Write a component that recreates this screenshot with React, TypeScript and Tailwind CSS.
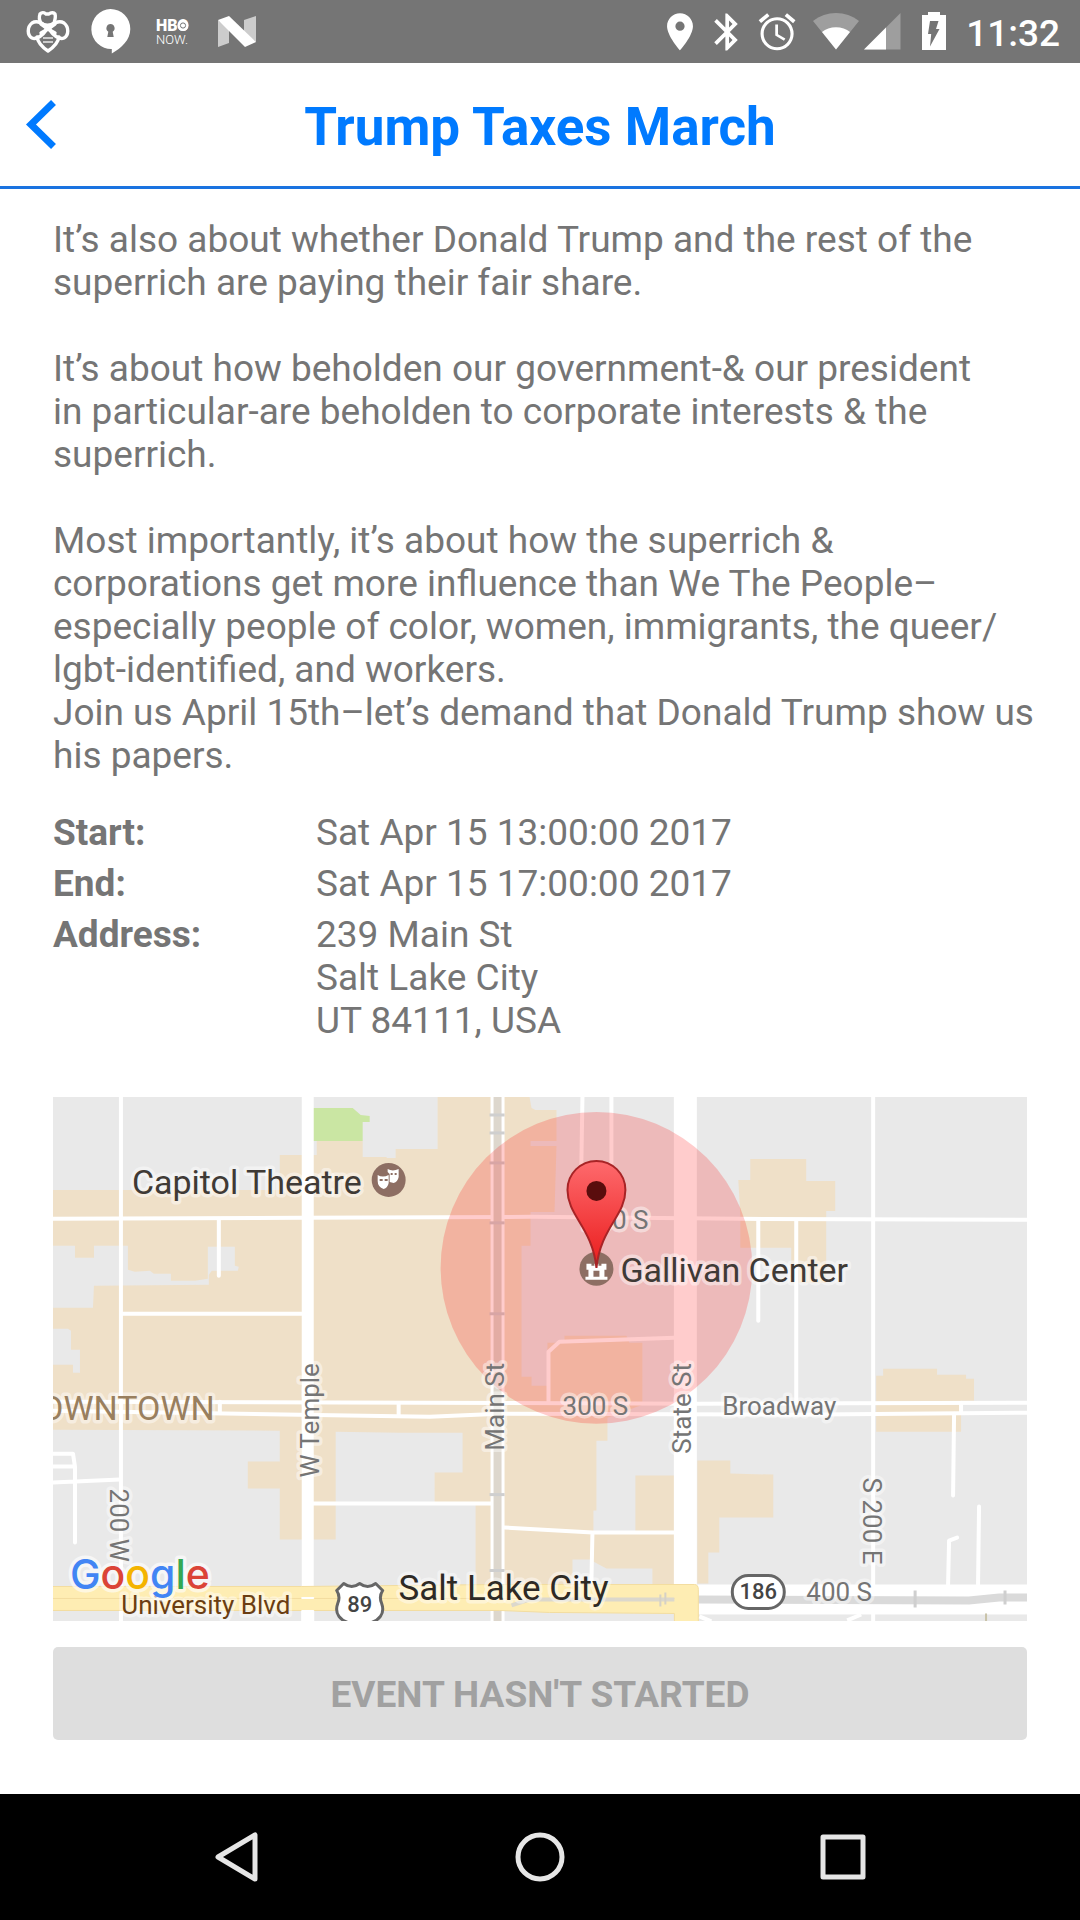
import React from "react";

const LAND = "#e9e9e9";
const BLOCK = "#efe0c8";

function StatusIcon({ x, width, className, children }: { x: number; width: number; className: string; children: React.ReactNode }) {
  return (
    <svg viewBox={`${x} 0 ${width} 63`} className={`h-full shrink-0 ${className}`} aria-hidden="true">
      {children}
    </svg>
  );
}

function StatusBar() {
  return (
    <div className="flex h-[63px] items-center justify-between bg-[#757575] pr-5 pl-4 text-white">
      <div className="flex h-full">
        <StatusIcon x={16} width={63} className="w-[63px]">
          <g fill="none" stroke="#fff" strokeWidth="3.4" strokeLinejoin="round" strokeLinecap="round">
            <path d="M41 23c-2-3-2-6-1-9 3-3 6 0 6 0h3s4-3 6 0c1 3 0 6-1 9-3 3-10 3-13 0z" />
            <path d="M47 29c-3-6-10-9-15-6-5 4-5 12 0 15 5 2 11-3 15-9z" />
            <path d="M49 29c3-6 10-9 15-6 5 4 5 12 0 15-5 2-11-3-15-9z" />
            <path d="M41 24l7 5 7-5M37 37c1 6 5 10 11 14 6-4 10-8 11-14M41 33l7-4 7 4" />
          </g>
          <path d="M43 37h10v2H43zM43 41h10v2H43z" fill="#ccc" />
        </StatusIcon>
        <StatusIcon x={79} width={63} className="w-[63px]">
          <path
            fill="#fff"
            fillRule="evenodd"
            d="M110.500 9a19.800 20 0 0 1 19.800 20c0 11-9 19-18.500 24.500v-4.500a19.800 20 0 0 1-1.300-40zM110.500 24a4.200 4.200 0 0 0-2.200 7.700l-1 5.300h6.400l-1-5.300a4.200 4.200 0 0 0-2.200-7.700z"
          />
        </StatusIcon>
        <StatusIcon x={142} width={63} className="w-[63px]">
          <text x="156" y="31" fill="#fff" fontFamily="Roboto, sans-serif" fontWeight="900" fontSize="16">HBO</text>
          <circle cx="183" cy="25.500" r="5.500" fill="#fff" />
          <circle cx="183" cy="25.500" r="2.600" fill="none" stroke="#757575" />
          <text x="156" y="44" fill="#fff" fontFamily="Roboto, sans-serif" fontWeight="300" fontSize="13">NOW.</text>
        </StatusIcon>
        <StatusIcon x={205} width={63} className="w-[63px]">
          <path d="M218 20l11 9v14l-11 4zM244 20l12-4v26l-12-9z" fill="#ccc" />
          <path d="M218 20l11-4 27 26-11 5z" fill="#fff" />
        </StatusIcon>
      </div>
      <div className="flex h-full items-center">
        <StatusIcon x={658} width={44} className="w-11">
          <path
            transform="translate(657.800 9.500) scale(1.850)"
            fill="#fff"
            d="M12 2C8.130 2 5 5.130 5 9c0 5.250 7 13 7 13s7-7.750 7-13c0-3.870-3.130-7-7-7zm0 9.500a2.500 2.500 0 010-5 2.500 2.500 0 010 5z"
          />
        </StatusIcon>
        <StatusIcon x={702} width={44} className="w-11">
          <path
            transform="translate(705 9.800) scale(1.850)"
            fill="#fff"
            d="M17.710 7.710L12 2h-1v7.590L6.410 5 5 6.410 10.590 12 5 17.590 6.410 19 11 14.410V22h1l5.710-5.710-4.300-4.290 4.300-4.290zM13 5.830l1.880 1.880L13 9.590V5.830zm1.880 10.460L13 18.170v-3.760l1.880 1.880z"
          />
        </StatusIcon>
        <StatusIcon x={746} width={60} className="w-[60px]">
          <path
            transform="translate(755 9.800) scale(1.840)"
            fill="#fff"
            d="M22 5.720l-4.600-3.860-1.290 1.530 4.600 3.860L22 5.720zM7.880 3.390L6.600 1.860 2 5.710l1.290 1.530 4.590-3.850zM12.500 8H11v6l4.750 2.850.750-1.230-3.990-2.370V8zM12 4c-4.970 0-9 4.030-9 9s4.020 9 9 9a9 9 0 000-18zm0 16.300c-4.050 0-7.300-3.250-7.300-7.300s3.250-7.300 7.300-7.300 7.300 3.250 7.300 7.300-3.250 7.300-7.300 7.300z"
          />
        </StatusIcon>
        <StatusIcon x={806} width={56} className="w-14">
          <path d="M836 49.500L813 21c13-10.700 33-10.700 46 0z" fill="#9e9e9e" />
          <path d="M836 49.500L822 32c7-6.500 21-6.500 28 0z" fill="#fff" />
        </StatusIcon>
        <StatusIcon x={862} width={40} className="w-10">
          <path d="M864 49.500L900.500 13v36.500z" fill="#9e9e9e" />
          <path d="M864 49.500L886 27.500v22z" fill="#fff" />
        </StatusIcon>
        <StatusIcon x={902} width={64} className="w-16">
          <path
            fill="#fff"
            fillRule="evenodd"
            d="M928 12h12v3h6v35h-24V15h6zM930 21h8.500l-2.500 8h3.500l-9.500 17.500 1.200-12.500h-3.200z"
          />
        </StatusIcon>
        <span className="pt-1 text-[37px] leading-none font-medium">11:32</span>
      </div>
    </div>
  );
}

function Header() {
  return (
    <header className="grid h-[126px] grid-cols-[120px_1fr_120px] items-center border-b-[3px] border-[#1a73e0] bg-white text-[#007aff]">
      <button type="button" aria-label="Back" className="flex h-full items-center pl-6">
        <svg viewBox="24 100 36 52" className="h-[52px] w-9" aria-hidden="true">
          <path d="M53.500 103.500L31 125.500L53.500 147.500" fill="none" stroke="currentColor" strokeWidth="7" />
        </svg>
      </button>
      <h1 className="pt-1.5 text-center text-[53px] leading-none font-bold">Trump Taxes March</h1>
    </header>
  );
}

type LabelProps = {
  x: number;
  y: number;
  size: number;
  fill: string;
  rotate?: number;
  anchor?: "start" | "middle" | "end";
  weight?: number;
  children: React.ReactNode;
};

function Label({ x, y, size, fill, rotate = 0, anchor = "start", weight = 400, children }: LabelProps) {
  return (
    <text
      transform={`translate(${x} ${y}) rotate(${rotate})`}
      fontSize={size}
      fontWeight={weight}
      fill={fill}
      textAnchor={anchor}
      stroke="#ffffff"
      strokeOpacity="0.45"
      strokeWidth="7"
      strokeLinejoin="round"
      paintOrder="stroke"
    >
      {children}
    </text>
  );
}

const railTicks = [1115, 1133, 1163, 1223, 1314, 1495, 1571];

function EventMap() {
  return (
    <svg
      viewBox="53 1097 975 525"
      preserveAspectRatio="xMidYMid slice"
      className="block w-full"
      fontFamily="Roboto, sans-serif"
      role="img"
      aria-label="Map of Gallivan Center, Salt Lake City"
    >
      <defs>
        <linearGradient id="pin" x1="0" y1="0" x2="0" y2="1">
          <stop offset="0" stopColor="#fe6a6d" />
          <stop offset="1" stopColor="#ea1c1c" />
        </linearGradient>
      </defs>
      <rect x="53" y="1097" width="975" height="525" fill={LAND} />

      <g fill={BLOCK}>
        <path d="M53 1190H280V1155H317V1141H363V1157H387V1158H396V1149H438V1097H530L532 1108L536 1110H557V1141H531V1146H557L555 1212H531V1246H522V1377H532V1386H548V1343H565V1336H627L630 1343H643V1405L608 1418V1441H597V1511H594V1532H636V1476H675V1585H653V1569H607L590 1560H573V1585H476V1504H435V1473H463V1433H400L336 1432V1540H280V1489H248V1462H280V1431L53 1430V1365H73V1373H80V1350H71V1331L68 1329H53Z" />
        <path d="M751 1159H807V1181H836V1211H827V1283H792V1248H741V1215L739 1180H751Z" />
        <path d="M884 1369H938V1375H967V1379H975V1401H962V1432H877V1376H884Z" />
        <path d="M698 1461H731V1474L774 1475V1518H720V1553H709V1584H698Z" />
      </g>
      <path
        fill={LAND}
        d="M53 1246H75V1258H94V1246H128V1270L135 1272L150 1271L154 1274H171V1281H195L208 1279V1247H235V1266L239 1267L238 1271H212L209 1275V1285L94 1286L93 1308H53Z"
      />
      <path fill="#cae6a3" d="M313 1108H353L361 1115L370 1116V1122H363V1141H313Z" />

      <g fill="none" stroke="#fff" strokeWidth="4" strokeLinecap="round" strokeLinejoin="round">
        <path d="M53 1219L302 1218L531 1217L740 1219L1028 1220" />
        <path d="M121 1097V1622M874 1097V1622" />
        <path d="M219 1219V1276M121 1314H302" />
        <path d="M53 1402L700 1404L1028 1403M53 1411L300 1415L430 1417L500 1414L790 1415L1028 1413" />
        <path d="M220 1402V1413M399 1404V1415M962 1403V1413" />
        <path d="M583 1097L581 1217M612 1097V1217" />
        <path d="M549 1403V1352L560 1342L675 1338" />
        <path d="M759 1220V1321M797 1220V1403" />
        <path d="M53 1454H73L75 1467V1543M53 1467H75M53 1483L120 1480" />
        <path d="M313 1504H492M505 1528L593 1533H675M593 1533L592 1580" />
        <path d="M955 1414L954 1496M980 1507L979 1585M949 1585L950 1541L958 1538" />
      </g>
      <path d="M308 1097V1622" stroke="#fff" strokeWidth="12" />
      <path d="M686 1097V1600" stroke="#fff" strokeWidth="23" />
      <path d="M498 1097V1622" stroke="#fff" strokeWidth="14" />
      <path d="M498 1097V1622" stroke="#ddd7cd" strokeWidth="8" />
      <g stroke="#cfcfcf" strokeWidth="3">
        {railTicks.map((y) => (
          <path key={y} d={`M490 ${y}h15`} />
        ))}
      </g>

      <rect x="698" y="1585" width="330" height="30" fill="#fff" />
      <path d="M698 1600L970 1601L1000 1598H1028" fill="none" stroke="#dadada" strokeWidth="8" />
      <path d="M916 1591v17M1006 1591v14" stroke="#cfcfcf" strokeWidth="3" />
      <path
        d="M40 1587H302L500 1585H695Q699 1585 699 1590V1630H675V1614L550 1613L500 1611H40Z"
        fill="#feedb3"
        stroke="#f3dda0"
      />
      <path d="M53 1599H675" stroke="#f3dda0" />
      <path d="M302 1599h12v-1h-12zM302 1611h12v11h-12z" fill="#fff" stroke="#fff" />
      <path d="M512 1606L530 1600H675" fill="none" stroke="#dcd8cc" strokeWidth="4" />
      <path d="M661 1595v12M666 1593v12" stroke="#d5d1c6" strokeWidth="2" />
      <path d="M848 1621L862 1615M700 1617l12 5" stroke="#fff" strokeWidth="4" />
      <path d="M987 1614v8" stroke="#c9c3a8" strokeWidth="2" />

      <circle cx="597" cy="1268" r="156" fill="#ff0000" fillOpacity="0.2" />

      <Label x={132} y={1194} size={34} fill="#3f3a36">Capitol Theatre</Label>
      <Label x={649} y={1229} size={26} fill="#757575" anchor="end">200 S</Label>
      <Label x={215} y={1420} size={34} fill="#997f5e" anchor="end">DOWNTOWN</Label>
      <Label x={319} y={1478} size={26} fill="#757575" rotate={-90}>W Temple</Label>
      <Label x={504} y={1451} size={26} fill="#757575" rotate={-90}>Main St</Label>
      <Label x={692} y={1454} size={26} fill="#757575" rotate={-90}>State St</Label>
      <Label x={596} y={1415} size={26} fill="#757575" anchor="middle">300 S</Label>
      <Label x={780} y={1415} size={26} fill="#757575" anchor="middle">Broadway</Label>
      <Label x={110} y={1489} size={26} fill="#757575" rotate={90}>200 W</Label>
      <Label x={864} y={1478} size={26} fill="#757575" rotate={90}>S 200 E</Label>
      <Label x={840} y={1602} size={26} fill="#757575" anchor="middle">400 S</Label>
      <Label x={206} y={1615} size={26} fill="#6b3e12" anchor="middle">University Blvd</Label>
      <Label x={504} y={1601} size={35} fill="#2e2a25" anchor="middle">Salt Lake City</Label>

      <path
        d="M344 1584Q352 1590 360 1584Q368 1590 376 1584L383 1591Q379 1597 382 1604C386 1615 378 1621 372 1623H348C342 1621 334 1615 338 1604Q341 1597 337 1591Z"
        fill="#fff"
        stroke="#666"
        strokeWidth="3"
        strokeLinejoin="round"
      />
      <text x="360" y="1613" fontSize="22" fontWeight="500" fill="#444" textAnchor="middle">89</text>
      <rect x="733" y="1576" width="52" height="33" rx="16" fill="#fff" stroke="#666" strokeWidth="3" />
      <text x="759" y="1600" fontSize="22" fontWeight="500" fill="#444" textAnchor="middle">186</text>

      <circle cx="389" cy="1180" r="17" fill="#8d6e63" />
      <path d="M378 1175q5 3 11 0v8q-1 5-5 6-6-2-6-8z" fill="#fff" />
      <path d="M388 1169q5 3 11 0v8q-1 5-5 6l-4-1v-8l-2-2z" fill="#fff" />
      <path d="M380 1179h3v2h-3zM385 1179h3v2h-3zM391 1173h2v2h-2zM395 1173h2v2h-2z" fill="#8d6e63" />

      <circle cx="597" cy="1269" r="17" fill="#8d6e63" />
      <path
        d="M587 1264h5v2h3v-2h4v2h3v-2h5v6h-2v7h3v3h-22v-3h3v-7h-2zM594 1271v6h6v-6z"
        fill="#fff"
        fillRule="evenodd"
      />
      <Label x={621} y={1282} size={34} fill="#3f3a36">Gallivan Center</Label>
      <path
        d="M597 1268C593 1228 568 1216 568 1190a29 29 0 0 1 58 0C626 1216 601 1228 597 1268Z"
        fill="url(#pin)"
        stroke="#a82426"
        strokeWidth="2"
      />
      <circle cx="597" cy="1191" r="10" fill="#5a0d0d" />

      <text
        x="70"
        y="1590"
        fontFamily="Inter, sans-serif"
        fontWeight="500"
        fontSize="41"
        stroke="#fff"
        strokeOpacity="0.6"
        strokeWidth="7"
        strokeLinejoin="round"
        paintOrder="stroke"
      >
        <tspan fill="#4285f4">G</tspan>
        <tspan fill="#db4437">o</tspan>
        <tspan fill="#f4b400">o</tspan>
        <tspan fill="#4285f4">g</tspan>
        <tspan fill="#34a853">l</tspan>
        <tspan fill="#db4437">e</tspan>
      </text>
    </svg>
  );
}

function NavButton({ label, children }: { label: string; children: React.ReactNode }) {
  return (
    <button type="button" aria-label={label} className="flex flex-1 items-center justify-center">
      <svg viewBox="0 0 56 56" className="size-14" fill="none" stroke="#e6e6e6" strokeWidth="5" strokeLinejoin="round" aria-hidden="true">
        {children}
      </svg>
    </button>
  );
}

export default function App() {
  return (
    <div className="flex min-h-screen flex-col bg-white font-[Roboto,sans-serif]">
      <StatusBar />
      <Header />
      <main className="flex flex-1 flex-col pt-[29px] text-[37px] leading-[43px] text-[#757575]">
        <div className="flex flex-col gap-[43px] pr-10 pl-[53px]">
          <p>
            It’s also about whether Donald Trump and the rest of the
            <br />
            superrich are paying their fair share.
          </p>
          <p>
            It’s about how beholden our government-&amp; our president
            <br />
            in particular-are beholden to corporate interests &amp; the
            <br />
            superrich.
          </p>
          <p>
            Most importantly, it’s about how the superrich &amp;
            <br />
            corporations get more influence than We The People–
            <br />
            especially people of color, women, immigrants, the queer/
            <br />
            lgbt-identified, and workers.
            <br />
            Join us April 15th–let’s demand that Donald Trump show us
            <br />
            his papers.
          </p>
        </div>
        <dl className="mt-[34px] grid grid-cols-[263px_1fr] gap-y-2 px-[53px]">
          <dt className="font-bold">Start:</dt>
          <dd>Sat Apr 15 13:00:00 2017</dd>
          <dt className="font-bold">End:</dt>
          <dd>Sat Apr 15 17:00:00 2017</dd>
          <dt className="font-bold">Address:</dt>
          <dd>
            239 Main St
            <br />
            Salt Lake City
            <br />
            UT 84111, USA
          </dd>
        </dl>
        <div className="mt-[55px] flex flex-col gap-[26px] px-[53px] pb-[53px]">
          <EventMap />
          <button type="button" disabled className="h-[93px] rounded-[5px] bg-[#dedede] pt-0.5 font-bold text-[#a1a1a1]">
            EVENT HASN'T STARTED
          </button>
        </div>
      </main>
      <nav className="flex h-[126px] bg-black px-[85px]">
        <NavButton label="Back">
          <path d="M46 6V50L9 28Z" />
        </NavButton>
        <NavButton label="Home">
          <circle cx="28" cy="28" r="22" />
        </NavButton>
        <NavButton label="Recent apps">
          <rect x="8" y="8" width="40" height="40" />
        </NavButton>
      </nav>
    </div>
  );
}
